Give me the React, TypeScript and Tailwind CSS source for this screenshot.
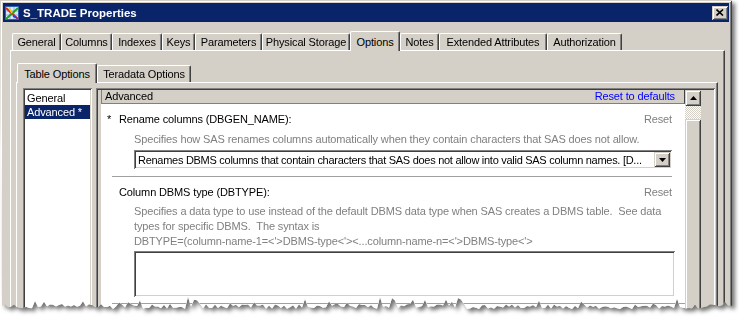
import React from "react";

const outerTabs = [
  { label: "General", w: "w-[49px]" },
  { label: "Columns", w: "w-[51px]" },
  { label: "Indexes", w: "w-[50px]" },
  { label: "Keys", w: "w-[33px]" },
  { label: "Parameters", w: "w-[67px]" },
  { label: "Physical Storage", w: "w-[88px]" },
  { label: "Options", w: "w-[50px]", active: true },
  { label: "Notes", w: "w-[39px]" },
  { label: "Extended Attributes", w: "w-[108px]" },
  { label: "Authorization", w: "w-[75px]" },
];

const raised =
  "shadow-[inset_1px_1px_#d4d0c8,inset_-1px_-1px_#404040,inset_2px_2px_#ffffff,inset_-2px_-2px_#808080]";
const sunken =
  "shadow-[inset_1px_1px_#808080,inset_-1px_-1px_#ffffff,inset_2px_2px_#404040,inset_-2px_-2px_#d4d0c8]";

// jagged bottom edge of the cut-out screenshot
function tornEdge() {
  let seed = 11;
  const rnd = () => {
    seed = (seed * 9301 + 49297) % 233280;
    return seed / 233280;
  };
  const pts = ["0px 0px", "740px 0px"];
  for (let x = 740; x >= 0; x -= 3) {
    let y = 304 + rnd() * 5;
    if (rnd() > 0.88) y -= 4 + rnd() * 4;
    pts.push(`${x}px ${y.toFixed(1)}px`);
  }
  return `polygon(${pts.join(",")})`;
}

function Tab({ label, w, active }: { label: string; w: string; active?: boolean }) {
  if (active) {
    return (
      <div
        className={`${w} h-[20px] -mb-px relative z-10 bg-[#d4d0c8] border-t border-l border-white border-r border-r-[#404040] rounded-t-[2px] shadow-[inset_-1px_0_#808080] flex items-start justify-center pt-[3px] text-black`}
      >
        {label}
      </div>
    );
  }
  return (
    <div
      className={`${w} h-[17px] bg-[#d4d0c8] border-t border-l border-white border-r border-r-[#404040] rounded-t-[2px] shadow-[inset_-1px_0_#808080] flex items-center justify-center text-black`}
    >
      {label}
    </div>
  );
}

function TitleIcon() {
  return (
    <svg width="16" height="16" viewBox="0 0 16 16">
      <rect x="1.5" y="1.5" width="13" height="13" fill="#d8e8f8" stroke="#3060b0" />
      <path d="M2 6h12M2 10h12M6 2v12M10 2v12" stroke="#90b0e0" strokeWidth="1" />
      <path d="M2 3 L14 14" stroke="#e02020" strokeWidth="2" />
      <path d="M2 14 L14 3" stroke="#20a020" strokeWidth="2" />
      <path d="M5 3 L8 8" stroke="#f0d000" strokeWidth="1.5" />
      <path d="M9 11 L13 13" stroke="#2040e0" strokeWidth="1.5" />
    </svg>
  );
}

function Reset() {
  return <span className="text-[#808080]">Reset</span>;
}

export default function App() {
  return (
    <div className="w-[739px] h-[327px] bg-white overflow-hidden [font-family:'Liberation_Sans',Arial,sans-serif] text-[11px] leading-[14px] tracking-[-0.13px]">
      <div className="w-[732px] [filter:drop-shadow(3px_3px_2px_rgba(0,0,0,0.55))]">
        <div
          className={`h-[320px] bg-[#d4d0c8] p-[3px] flex flex-col ${raised}`}
          style={{ clipPath: tornEdge() }}
        >
          {/* title bar */}
          <div className="h-[19px] bg-[#0a246a] flex items-center pl-[1px] pr-[1px]">
            <TitleIcon />
            <span className="ml-[3px] text-white font-bold text-[11.5px] tracking-normal">S_TRADE Properties</span>
            <div className={`ml-auto w-[16px] h-[14px] bg-[#d4d0c8] flex items-center justify-center ${raised}`}>
              <svg width="8" height="7" viewBox="0 0 8 7">
                <path d="M0.5 0.5 L7 6.5 M7 0.5 L0.5 6.5" stroke="#000" strokeWidth="1.6" />
              </svg>
            </div>
          </div>

          {/* body */}
          <div className="flex-1 flex flex-col pl-[7px] pr-[4px] pt-[9px]">
            <div className="flex items-end h-[19px] pl-[2px]">
              {outerTabs.map((t) => (
                <Tab key={t.label} label={t.label} w={t.w} active={t.active} />
              ))}
            </div>

            <div className="flex-1 flex flex-col border-t border-l border-white border-r border-r-[#404040] shadow-[inset_-1px_0_#808080] pt-[12px] pl-[5px] pr-[6px]">
              <div className="flex items-end h-[19px] pl-[1px]">
                <Tab label="Table Options" w="w-[80px]" active />
                <Tab label="Teradata Options" w="w-[94px]" />
              </div>

              <div className="flex-1 flex border-t border-l border-white border-r border-r-[#404040] shadow-[inset_-1px_0_#808080] pt-[5px] pl-[6px] pr-[2px] gap-[4px]">
                {/* list */}
                <div className={`w-[69px] bg-white p-[2px] pt-[3px] ${sunken}`}>
                  <div className="h-[14px] px-[2px] flex items-center">General</div>
                  <div className="h-[14px] px-[2px] flex items-center bg-[#0a246a] text-white">Advanced *</div>
                </div>

                {/* content box */}
                <div className={`flex-1 flex bg-[#d4d0c8] p-[2px] pr-[14px] ${sunken}`}>
                  <div className="flex-1 flex flex-col pl-[3px]">
                    <div className="h-[14px] flex justify-between items-start bg-[#d4d0c8] border-l border-b border-[#808080] border-r border-r-[#404040] pl-[3px] pr-[9px] leading-[12px]">
                      <span>Advanced</span>
                      <span className="text-[#0000ff]">Reset to defaults</span>
                    </div>
                    <div className="flex-1 bg-white pt-[8px] pr-[13px]">
                      <div className="flex h-[14px] items-center pl-[6px]">
                        <span className="w-[12px]">*</span>
                        <span>Rename columns (DBGEN_NAME):</span>
                        <span className="ml-auto">
                          <Reset />
                        </span>
                      </div>
                      <div className="mt-[6px] pl-[33px] text-[#808080] whitespace-nowrap">
                        Specifies how SAS renames columns automatically when they contain characters that SAS does not allow.
                      </div>
                      <div className="mt-[4px] ml-[33px]">
                        <div className={`h-[19px] w-[538px] bg-white flex items-center p-[2px] ${sunken}`}>
                          <span className="flex-1 whitespace-nowrap pl-[2px] tracking-[-0.28px]">
                            Renames DBMS columns that contain characters that SAS does not allow into valid SAS column names. [D...
                          </span>
                          <div className={`w-[16px] h-[15px] shrink-0 bg-[#d4d0c8] flex items-center justify-center ${raised}`}>
                            <svg width="7" height="4" viewBox="0 0 7 4">
                              <path d="M0 0h7L3.5 4z" fill="#000" />
                            </svg>
                          </div>
                        </div>
                      </div>
                      <div className="mt-[7px] ml-[11px] h-px bg-[#a0a0a0]" />

                      <div className="mt-[8px] flex h-[14px] items-center pl-[18px]">
                        <span>Column DBMS type (DBTYPE):</span>
                        <span className="ml-auto">
                          <Reset />
                        </span>
                      </div>
                      <div className="mt-[5px] pl-[33px] text-[#808080] leading-[15px] whitespace-pre">
                        <div>Specifies a data type to use instead of the default DBMS data type when SAS creates a DBMS table.  See data</div>
                        <div>types for specific DBMS.  The syntax is</div>
                        <div>DBTYPE=(column-name-1=&lt;'&gt;DBMS-type&lt;'&gt;&lt;...column-name-n=&lt;'&gt;DBMS-type&lt;'&gt;</div>
                      </div>
                      <div className={`mt-[2px] ml-[33px] mr-[-3px] h-[46px] bg-white ${sunken}`} />
                      <div className="mt-[6px] ml-[11px] mr-[-13px] h-px bg-[#a0a0a0]" />
                    </div>
                  </div>

                  {/* scrollbar */}
                  <div className="w-[16px] flex flex-col">
                    <div className={`h-[16px] bg-[#d4d0c8] flex items-center justify-center ${raised}`}>
                      <svg width="7" height="4" viewBox="0 0 7 4">
                        <path d="M3.5 0L7 4H0z" fill="#000" />
                      </svg>
                    </div>
                    <div className="h-[13px] bg-[repeating-conic-gradient(#d4d0c8_0_25%,#ffffff_0_50%)] bg-[length:2px_2px]" />
                    <div className={`flex-1 bg-[#d4d0c8] ${raised}`} />
                  </div>
                </div>
              </div>
            </div>
          </div>
        </div>
      </div>
    </div>
  );
}
